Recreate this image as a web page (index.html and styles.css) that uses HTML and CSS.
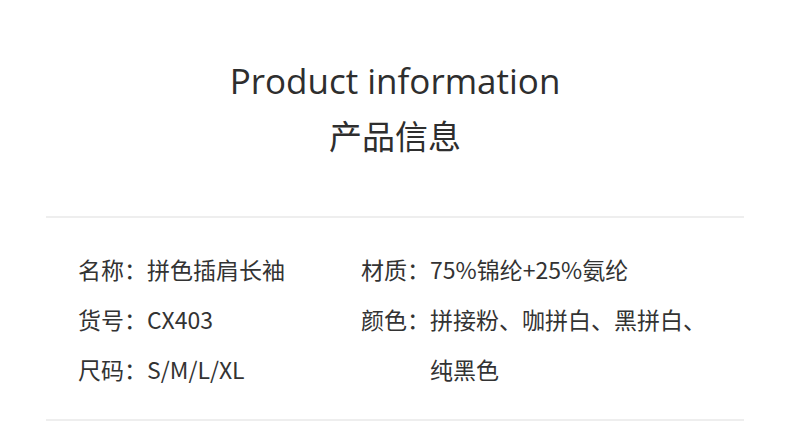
FILE: index.html
```html
<!DOCTYPE html>
<html lang="zh">
<head>
<meta charset="utf-8">
<link rel="stylesheet" href="styles.css">
</head>
<body>
<header class="head">
  <h1 class="title-en">Product information</h1>
  <h2 class="title-cn">产品信息</h2>
</header>
<section class="info">
  <div class="col col-left">
    <div class="row"><span class="label">名称：</span><span class="value">拼色插肩长袖</span></div>
    <div class="row"><span class="label">货号：</span><span class="value">CX403</span></div>
    <div class="row"><span class="label">尺码：</span><span class="value">S/M/L/XL</span></div>
  </div>
  <div class="col col-right">
    <div class="row"><span class="label">材质：</span><span class="value">75%锦纶+25%氨纶</span></div>
    <div class="row"><span class="label">颜色：</span><span class="value wrap">拼接粉、咖拼白、黑拼白、纯黑色</span></div>
  </div>
</section>
</body>
</html>
```
FILE: styles.css
```css
html, body {
  margin: 0;
  padding: 0;
  background: #fff;
}
body {
  width: 790px;
  height: 442px;
  overflow: hidden;
  color: #333;
  font-family: "Noto Sans CJK SC", "Noto Sans", sans-serif;
}
.head {
  text-align: center;
  padding-top: 57px;
  height: 218px;
  box-sizing: border-box;
  margin: 0 46px;
  border-bottom: 2px solid #eeeeee;
}
.title-en {
  margin: 0;
  font-family: "Open Sans", "Noto Sans", sans-serif;
  font-weight: 400;
  font-size: 35px;
  line-height: 48px;
  color: #2e2e2e;
}
.title-cn {
  margin: 10px 0 0;
  font-weight: 400;
  font-size: 33px;
  line-height: 40px;
  color: #2e2e2e;
}
.info {
  margin: 0 46px;
  padding: 26px 0 25px 32px;
  display: flex;
  border-bottom: 2px solid #eeeeee;
  font-size: 23px;
  line-height: 50px;
}
.col-left {
  width: 283px;
}
.col-right {
  flex: 1;
}
.row {
  display: flex;
}
.label {
  flex: none;
}
.value {
  display: block;
}
.wrap {
  width: 280px;
}
```
